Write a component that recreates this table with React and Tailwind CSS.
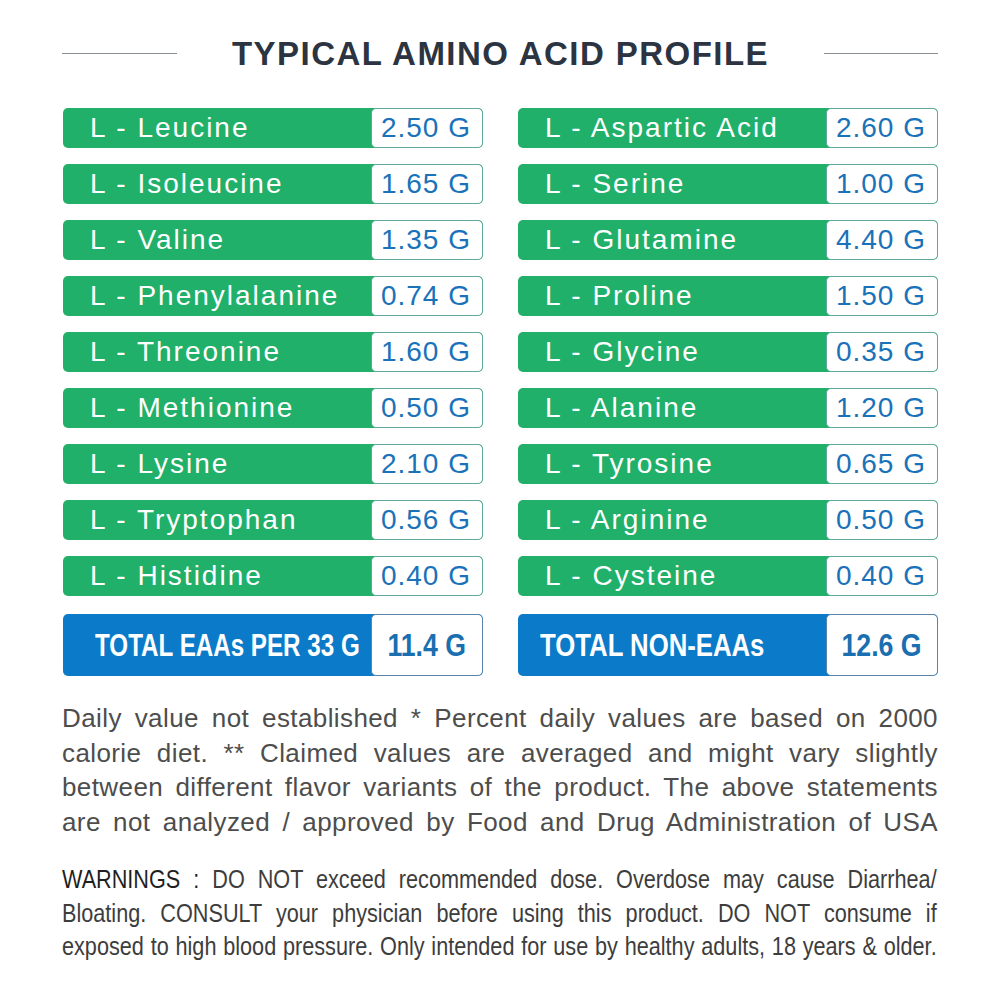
import React from "react";

const left = [
  ["L - Leucine", "2.50 G"],
  ["L - Isoleucine", "1.65 G"],
  ["L - Valine", "1.35 G"],
  ["L - Phenylalanine", "0.74 G"],
  ["L - Threonine", "1.60 G"],
  ["L - Methionine", "0.50 G"],
  ["L - Lysine", "2.10 G"],
  ["L - Tryptophan", "0.56 G"],
  ["L - Histidine", "0.40 G"],
];
const right = [
  ["L - Aspartic Acid", "2.60 G"],
  ["L - Serine", "1.00 G"],
  ["L - Glutamine", "4.40 G"],
  ["L - Proline", "1.50 G"],
  ["L - Glycine", "0.35 G"],
  ["L - Alanine", "1.20 G"],
  ["L - Tyrosine", "0.65 G"],
  ["L - Arginine", "0.50 G"],
  ["L - Cysteine", "0.40 G"],
];

const notes = [
  "Daily value not established * Percent daily values are based on 2000",
  "calorie diet. ** Claimed values are averaged and might vary slightly",
  "between different flavor variants of the product. The above statements",
  "are not analyzed / approved by Food and Drug Administration of USA",
];

function Row({ name, value }) {
  return (
    <div className="flex h-[40px] rounded-[5px] bg-[#21b06a] overflow-hidden">
      <div className="flex-1 min-w-0 flex items-center pl-[27px] text-white text-[28px] tracking-[2px] leading-none whitespace-nowrap">
        {name}
      </div>
      <div className="w-[112px] shrink-0 flex items-center justify-end pr-[11px] bg-white border border-[#5fa89a] rounded-[5px] text-[#1a72b8] text-[28px] tracking-[1px] leading-none whitespace-nowrap">
        {value}
      </div>
    </div>
  );
}

function Total({ name, value, pad, scale }) {
  return (
    <div className="flex h-[62px] rounded-[5px] bg-[#0b7bc9] overflow-hidden">
      <div className={"flex-1 min-w-0 flex items-center text-white text-[31px] font-bold leading-none whitespace-nowrap " + pad}>
        <span className={"inline-block origin-left " + scale}>{name}</span>
      </div>
      <div className="w-[112px] shrink-0 flex items-center justify-center bg-white border border-[#5a85a8] rounded-[5px] text-[#1a6fb0] text-[31px] font-bold leading-none whitespace-nowrap">
        <span className="inline-block scale-x-[0.86]">{value}</span>
      </div>
    </div>
  );
}

export default function App() {
  return (
    <div
      className="w-[1000px] h-[1000px] bg-white pl-[62px] pr-[62px] overflow-hidden"
      style={{ fontFamily: '"Liberation Sans", Arial, sans-serif' }}
    >
      <div className="flex items-center justify-between pt-[33px] h-[73px]">
        <div className="w-[115px] h-px bg-[#8a8f93]" />
        <div className="text-[33px] font-bold text-[#2b3440] leading-none tracking-[1.45px] whitespace-nowrap">
          TYPICAL AMINO ACID PROFILE
        </div>
        <div className="w-[114px] h-px bg-[#8a8f93]" />
      </div>
      <div className="grid grid-cols-2 gap-x-[35px] gap-y-[16px] mt-[35px] pl-[1px]">
        {left.map((l, i) => (
          <React.Fragment key={i}>
            <Row name={l[0]} value={l[1]} />
            <Row name={right[i][0]} value={right[i][1]} />
          </React.Fragment>
        ))}
      </div>
      <div className="grid grid-cols-2 gap-x-[35px] mt-[18px] pl-[1px]">
        <Total name="TOTAL EAAs PER 33 G" value="11.4 G" pad="pl-[32px]" scale="scale-x-[0.78]" />
        <Total name="TOTAL NON-EAAs" value="12.6 G" pad="pl-[22px]" scale="scale-x-[0.83]" />
      </div>
      <div className="mt-[25px] flex flex-col text-[26px] leading-[34.5px] tracking-[0.4px] text-[#4d4d4d]">
        {notes.map((n, i) => (
          <div key={i} className="text-justify [text-align-last:justify]">
            {n}
          </div>
        ))}
      </div>
      <div className="mt-[24px] flex flex-col text-[25px] leading-[33.5px] text-[#3d3d3d]">
        <div className="w-[1010px] origin-left scale-x-[0.866] text-justify [text-align-last:justify]">
          <span className="text-[#1f1f1f]">WARNINGS :</span> DO NOT exceed recommended dose. Overdose may cause Diarrhea/
        </div>
        <div className="w-[1010px] origin-left scale-x-[0.866] text-justify [text-align-last:justify]">
          Bloating. CONSULT your physician before using this product. DO NOT consume if
        </div>
        <div className="w-[1010px] origin-left scale-x-[0.866] text-justify [text-align-last:justify]">
          exposed to high blood pressure. Only intended for use by healthy adults, 18 years &amp; older.
        </div>
      </div>
    </div>
  );
}
